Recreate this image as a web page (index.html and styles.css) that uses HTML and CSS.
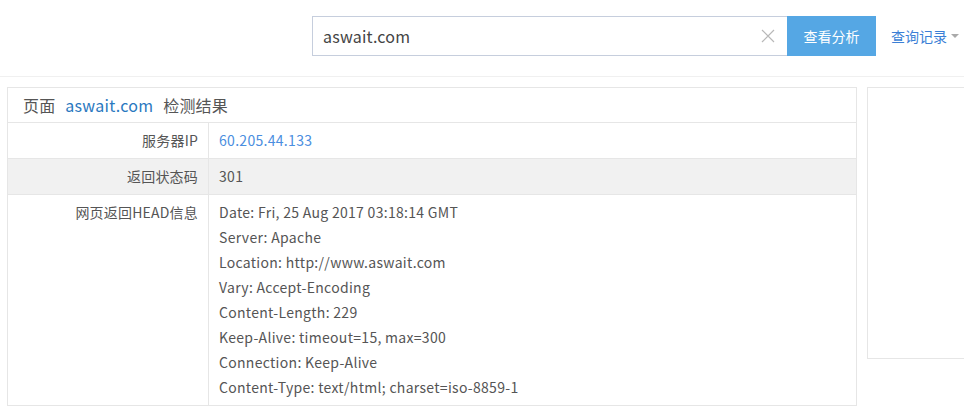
FILE: index.html
```html
<!DOCTYPE html>
<html lang="zh-CN">
<head>
<meta charset="utf-8">
<title>aswait.com 检测结果</title>
<link rel="stylesheet" href="styles.css">
</head>
<body>
<header class="topbar">
  <form class="search">
    <div class="search-box">
      <span class="search-text">aswait.com</span>
      <svg class="clear" width="14" height="14" viewBox="0 0 14 14"><path d="M1 1L13 13M13 1L1 13" stroke="#b8b8b8" stroke-width="1.2" fill="none"/></svg>
    </div>
    <button type="button" class="search-btn">查看分析</button>
  </form>
  <a class="history">查询记录<span class="caret"></span></a>
</header>
<main class="content">
  <section class="result">
    <div class="result-title">页面 <a class="site">aswait.com</a> 检测结果</div>
    <div class="row">
      <div class="label">服务器IP</div>
      <div class="value"><a class="ip">60.205.44.133</a></div>
    </div>
    <div class="row row-alt">
      <div class="label">返回状态码</div>
      <div class="value">301</div>
    </div>
    <div class="row row-last">
      <div class="label">网页返回HEAD信息</div>
      <div class="value head-lines">
        <div>Date: Fri, 25 Aug 2017 03:18:14 GMT</div>
        <div>Server: Apache</div>
        <div>Location: http://www.aswait.com</div>
        <div>Vary: Accept-Encoding</div>
        <div>Content-Length: 229</div>
        <div>Keep-Alive: timeout=15, max=300</div>
        <div>Connection: Keep-Alive</div>
        <div>Content-Type: text/html; charset=iso-8859-1</div>
      </div>
    </div>
  </section>
  <aside class="side"></aside>
</main>
</body>
</html>
```
FILE: styles.css
```css
html, body {
  margin: 0;
  padding: 0;
  background: #fff;
  overflow: hidden;
}
body {
  font-family: "Noto Sans CJK SC", "Noto Sans", sans-serif;
  color: #555;
  font-size: 14px;
}
a { text-decoration: none; cursor: pointer; }

.topbar {
  height: 77px;
  border-bottom: 1px solid #f0f0f0;
  display: flex;
  align-items: flex-start;
  padding: 16px 0 0 312px;
  box-sizing: border-box;
}
.search {
  display: flex;
  margin: 0;
}
.search-box {
  width: 475px;
  height: 40px;
  box-sizing: border-box;
  border: 1px solid #c6cedd;
  border-right: none;
  display: flex;
  align-items: center;
  padding-left: 10px;
  padding-right: 12px;
}
.search-text {
  flex: 1;
  font-size: 16px;
  letter-spacing: 0.2px;
  color: #444;
}
.clear { display: block; }
.search-btn {
  width: 89px;
  height: 40px;
  border: none;
  background: #55a7e4;
  color: #fff;
  font-family: inherit;
  font-size: 14px;
  padding: 0;
}
.history {
  margin-left: 15px;
  height: 40px;
  color: #3b7fd6;
  font-size: 14px;
  display: flex;
  align-items: center;
}
.caret {
  display: inline-block;
  margin-left: 4px;
  width: 0;
  height: 0;
  border-left: 4px solid transparent;
  border-right: 4px solid transparent;
  border-top: 4px solid #aaa;
}

.content {
  display: flex;
  align-items: flex-start;
  padding: 10px 0 0 7px;
  gap: 10px;
}
.result {
  width: 850px;
  flex: none;
  border: 1px solid #e6e6e6;
  box-sizing: border-box;
}
.result-title {
  height: 34px;
  line-height: 34px;
  padding-left: 15px;
  font-size: 16px;
  color: #555;
  border-bottom: 1px solid #e6e6e6;
  word-spacing: 6px;
  letter-spacing: 0.2px;
}
.site { color: #2a78c0; word-spacing: 0; letter-spacing: 0.3px; }
.row {
  display: flex;
  border-bottom: 1px solid #e6e6e6;
}
.row-last { border-bottom: none; }
.row-alt { background: #f1f1f1; }
.label {
  width: 201px;
  flex: none;
  box-sizing: border-box;
  text-align: right;
  padding: 7px 10px 7px 0;
  line-height: 21px;
  border-right: 1px solid #e6e6e6;
  color: #555;
  letter-spacing: 0.2px;
}
.value {
  flex: 1;
  padding: 7px 10px;
  line-height: 21px;
  color: #555;
  letter-spacing: 0.3px;
}
.ip { color: #4a8ee0; }
.head-lines {
  padding-top: 5px;
  padding-bottom: 5px;
  line-height: 25px;
}
.row-last .label {
  padding-top: 5px;
  line-height: 25px;
}
.side {
  width: 300px;
  flex: none;
  height: 272px;
  border: 1px solid #e6e6e6;
  box-sizing: border-box;
}
```
